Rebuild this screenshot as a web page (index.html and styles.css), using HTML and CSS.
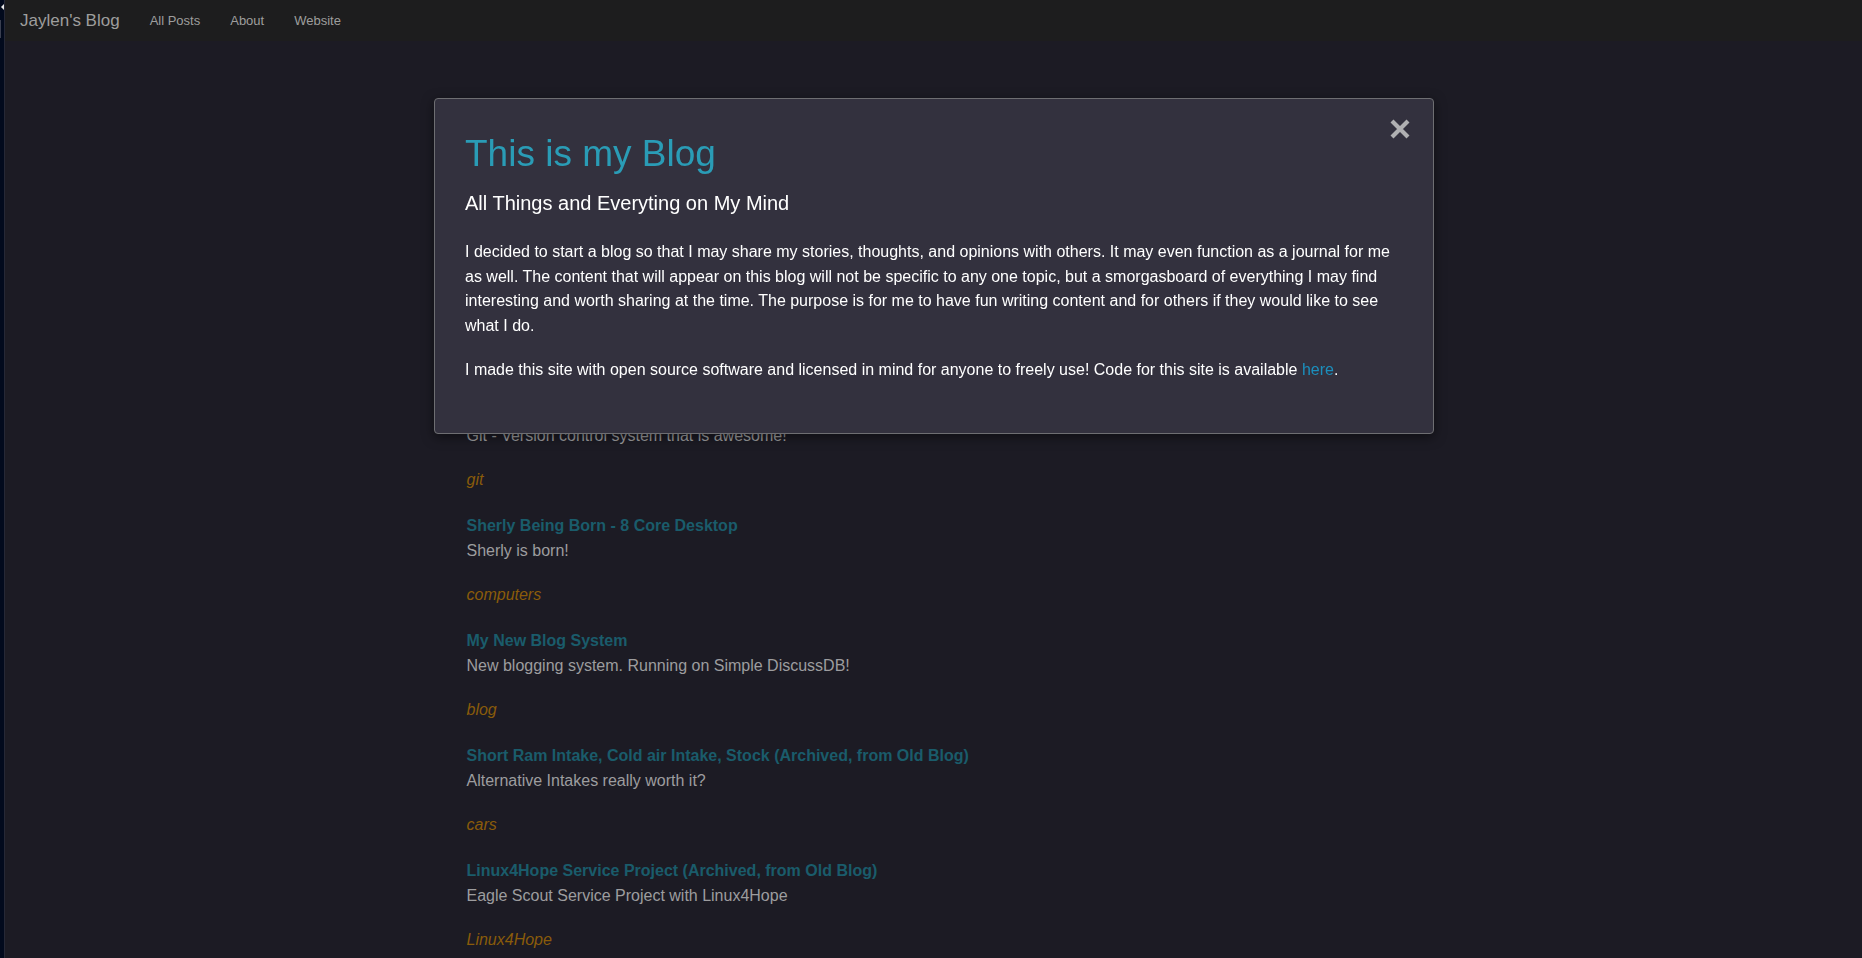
FILE: index.html
```html
<!DOCTYPE html>
<html lang="en">
<head>
<meta charset="utf-8">
<title>Jaylen's Blog</title>
<link rel="stylesheet" href="styles.css">
</head>
<body>
<div class="edge"><span class="edge-arrow"></span><span class="edge-bar"></span></div>
<div class="page">
  <nav class="navbar">
    <a class="brand" href="#">Jaylen's Blog</a>
    <a class="nav-link" href="#">All Posts</a>
    <a class="nav-link" href="#">About</a>
    <a class="nav-link" href="#">Website</a>
  </nav>
  <main class="posts">
    <article class="post">
      <a class="post-title" href="#">Git</a>
      <p class="post-desc">Git - Version control system that is awesome!</p>
      <p class="post-tag">git</p>
    </article>
    <article class="post">
      <a class="post-title" href="#">Sherly Being Born - 8 Core Desktop</a>
      <p class="post-desc">Sherly is born!</p>
      <p class="post-tag">computers</p>
    </article>
    <article class="post">
      <a class="post-title" href="#">My New Blog System</a>
      <p class="post-desc">New blogging system. Running on Simple DiscussDB!</p>
      <p class="post-tag">blog</p>
    </article>
    <article class="post">
      <a class="post-title" href="#">Short Ram Intake, Cold air Intake, Stock (Archived, from Old Blog)</a>
      <p class="post-desc">Alternative Intakes really worth it?</p>
      <p class="post-tag">cars</p>
    </article>
    <article class="post">
      <a class="post-title" href="#">Linux4Hope Service Project (Archived, from Old Blog)</a>
      <p class="post-desc">Eagle Scout Service Project with Linux4Hope</p>
      <p class="post-tag">Linux4Hope</p>
    </article>
  </main>
</div>
<div class="overlay">
  <div class="modal">
    <button class="close" aria-label="Close">
      <svg width="22" height="22" viewBox="0 0 22 22"><path d="M3 3 L19 19 M19 3 L3 19" stroke="#b0b0b2" stroke-width="4.2" fill="none"/></svg>
    </button>
    <h1 class="modal-title">This is my Blog</h1>
    <h4 class="modal-sub">All Things and Everyting on My Mind</h4>
    <p class="modal-text">I decided to start a blog so that I may share my stories, thoughts, and opinions with others. It may even function as a journal for me as well. The content that will appear on this blog will not be specific to any one topic, but a smorgasboard of everything I may find interesting and worth sharing at the time. The purpose is for me to have fun writing content and for others if they would like to see what I do.</p>
    <p class="modal-text">I made this site with open source software and licensed in mind for anyone to freely use! Code for this site is available <a class="modal-link" href="#">here</a>.</p>
  </div>
</div>
</body>
</html>
```

FILE: styles.css
```css
html, body {
  margin: 0;
  padding: 0;
}
body {
  background: #1c1b24;
  font-family: "Liberation Sans", Arial, sans-serif;
  font-size: 16px;
  line-height: 24.6px;
  color: #9c9c9c;
  height: 958px;
  overflow: hidden;
}
.edge {
  position: fixed;
  left: 0;
  top: 0;
  bottom: 0;
  width: 4px;
  background: #020a1d;
  border-right: 1px solid #262836;
}
.edge-arrow {
  position: absolute;
  left: 1px;
  top: 4px;
  width: 0;
  height: 0;
  border-top: 3px solid transparent;
  border-bottom: 3px solid transparent;
  border-right: 3px solid #e8e8e8;
}
.edge-bar {
  position: absolute;
  left: 0;
  top: 20px;
  width: 1px;
  height: 18px;
  background: #3a3f50;
}
.page {
  margin-left: 5px;
}
.navbar {
  display: flex;
  align-items: center;
  height: 41px;
  background: #1d1d1e;
  padding-left: 16px;
  margin-left: -1px;
}
.brand {
  font-size: 17px;
  line-height: 41px;
  color: #9d9d9d;
  text-decoration: none;
  padding-right: 15px;
}
.nav-link {
  font-size: 13px;
  line-height: 41px;
  color: #9d9d9d;
  text-decoration: none;
  padding: 0 15px;
}
.posts {
  width: 936px;
  margin: 0 auto;
  padding: 357px 32px 0;
  box-sizing: content-box;
  position: relative;
  left: 1px;
}
.post {
  margin-bottom: 21px;
}
.post-title {
  display: block;
  font-weight: bold;
  color: #1a5c6b;
  text-decoration: none;
  line-height: 25px;
}
.post-desc {
  margin: 0;
  line-height: 25px;
  color: #9d9d9f;
}
.post-tag {
  margin: 19px 0 0;
  line-height: 25px;
  font-style: italic;
  color: #8a5c0a;
}
.overlay {
  position: fixed;
  inset: 0;
  padding-left: 6px;
}
.modal {
  position: relative;
  width: 1000px;
  box-sizing: border-box;
  margin: 98px auto 0;
  padding: 35.3px 30px 30px;
  background: #33313e;
  border: 1px solid #6e6e72;
  border-radius: 4px;
  box-shadow: 0 3px 12px rgba(0, 0, 0, 0.5);
  color: #ffffff;
}
.close {
  position: absolute;
  top: 19px;
  right: 22px;
  width: 22px;
  height: 22px;
  padding: 0;
  border: 0;
  background: transparent;
  cursor: pointer;
}
.close svg {
  display: block;
}
.modal-title {
  margin: 0 0 17px;
  font-size: 37px;
  line-height: 1.1;
  font-weight: normal;
  color: #2a9cb6;
}
.modal-sub {
  margin: 0 0 26px;
  font-size: 20px;
  line-height: 1.1;
  font-weight: normal;
  color: #ffffff;
}
.modal-text {
  margin: 0 0 20px;
  font-size: 16px;
  line-height: 24.6px;
  color: #ffffff;
}
.modal-link {
  color: #1b8fbd;
  text-decoration: none;
}
```
